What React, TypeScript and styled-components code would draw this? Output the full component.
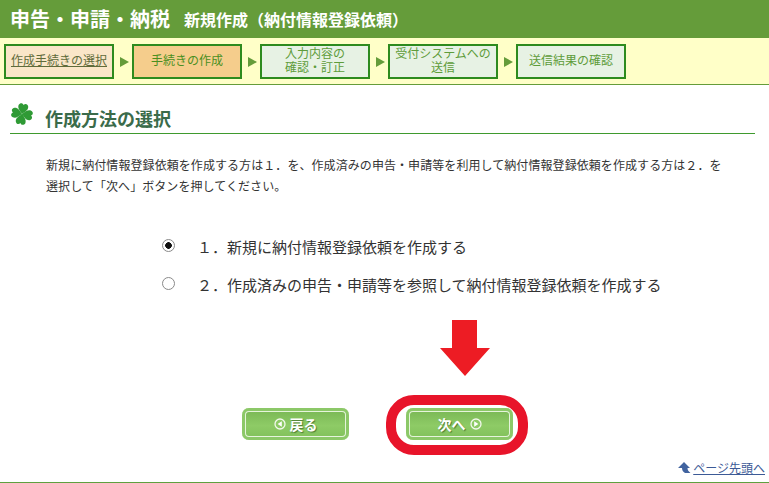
import styled, { createGlobalStyle } from 'styled-components';

const GlobalStyle = createGlobalStyle`
    html, body {
        margin: 0;
        padding: 0;
        background: #fff;
        overflow: hidden;
    }
    body {
        font-family: 'Noto Sans CJK JP', 'Noto Sans', sans-serif;
    }
`;

const Page = styled.div`
    width: 769px;
    height: 483px;
    display: flex;
    flex-direction: column;
`;

const TitleBar = styled.header`
    height: 38px;
    padding-left: 10px;
    display: flex;
    align-items: center;
    gap: 14px;
    background: #659c3a;
    color: #fff;
    font-weight: 700;
`;

const MainTitle = styled.h1`
    margin: 0;
    font-size: 20px;
    line-height: 38px;
`;

const SubTitle = styled.span`
    font-size: 16px;
`;

const StepBar = styled.nav`
    height: 47px;
    padding: 6px 0 0 4px;
    box-sizing: border-box;
    display: flex;
    background: #ffffc8;
    border-bottom: 1px solid #659c3a;
`;

const Step = styled.div<{ $state: 'done' | 'active' | 'todo' }>`
    width: 110px;
    height: 35px;
    padding-bottom: 3px;
    box-sizing: border-box;
    display: flex;
    align-items: center;
    justify-content: center;
    text-align: center;
    font-size: 12px;
    line-height: 14px;
    border: 2px solid #2e8b1e;
    color: ${p => (p.$state === 'done' ? '#5f6b3a' : p.$state === 'active' ? '#4a8f1f' : '#5e9c3a')};
    background: ${p => (p.$state === 'done' ? '#fae6c8' : p.$state === 'active' ? '#f5cd8c' : '#e7f2e4')};
    text-decoration: ${p => (p.$state === 'done' ? 'underline' : 'none')};
`;

const StepArrow = styled.span`
    width: 18px;
    height: 35px;
    display: flex;
    align-items: center;
    justify-content: center;
    &::before {
        content: '';
        margin-left: 2px;
        border-left: 9px solid #659c3a;
        border-top: 5px solid transparent;
        border-bottom: 5px solid transparent;
    }
`;

const Content = styled.main`
    flex: 1;
    display: flex;
    flex-direction: column;
    border-bottom: 1px solid #5fa040;
`;

const SectionHead = styled.div`
    margin: 17px 14px 0 10px;
    height: 31px;
    display: flex;
    align-items: flex-start;
    gap: 11px;
    border-bottom: 1px solid #3f9a2e;
`;

const SectionTitle = styled.h2`
    margin: 5px 0 0;
    font-size: 18px;
    line-height: 22px;
    font-weight: 700;
    color: #3a6b4a;
`;

const Lead = styled.p`
    margin: 20px 0 0 46px;
    width: 680px;
    font-size: 12px;
    letter-spacing: 0.07px;
    line-height: 21px;
    color: #333;
`;

const OptionList = styled.div`
    margin: 40px 0 0 162px;
    display: flex;
    flex-direction: column;
    gap: 17px;
`;

const Option = styled.label`
    height: 21px;
    display: flex;
    align-items: center;
    gap: 22px;
    font-size: 15px;
    color: #333;
`;

const Radio = styled.input`
    appearance: none;
    width: 13px;
    height: 13px;
    margin: -3px 0 0;
    box-sizing: border-box;
    border: 1px solid #8a8a8a;
    border-radius: 50%;
    background: #fff;
    &:checked {
        background: radial-gradient(circle, #111 0 3px, #fff 3.6px);
    }
`;

const ArrowRow = styled.div`
    margin: 25px 0 0 440px;
    height: 56px;
`;

const ButtonRow = styled.div`
    margin: 32px 0 0 242px;
    display: flex;
    gap: 57px;
`;

const NavButton = styled.div`
    position: relative;
    width: 107px;
    height: 32px;
    display: flex;
    align-items: center;
    justify-content: center;
    gap: 4px;
    border-radius: 7px;
    background: linear-gradient(#77b553, #8ecb66 55%, #7fbf59);
    box-shadow: inset 0 0 0 3px #8cc868, inset 0 0 0 4px #e6f4dc;
    color: #fff;
    font-size: 14px;
    font-weight: 700;
    text-shadow: 1px 1px 1px #4c7d33;
`;

const Ring = styled.span`
    position: absolute;
    left: -20px;
    top: -13px;
    width: 142px;
    height: 60px;
    box-sizing: border-box;
    border: 10px solid #e8142a;
    border-radius: 28px;
`;

const TopLinkRow = styled.div`
    margin: 20px 4px 0 0;
    display: flex;
    justify-content: flex-end;
    align-items: center;
    gap: 2px;
`;

const TopLink = styled.a`
    font-size: 12px;
    line-height: 16px;
    color: #3c5a96;
    text-decoration: underline;
`;

const Clover = () => (
    <svg width="24" height="24" viewBox="0 0 22 23">
        {[0, 90, 180, 270].map(r => (
            <path
                key={r}
                transform={`rotate(${r + 10} 11 11.5)`}
                d="M11 11.5C8 8.5 5.6 6.5 6.4 3.4 7.1 1 9.9 .6 11 2.8 12.1 .6 14.9 1 15.6 3.4 16.4 6.5 14 8.5 11 11.5Z"
                fill="#2f9a35"
            />
        ))}
        <path d="M11 11.5l2.5 9" stroke="#2f9a35" strokeWidth="1.4" fill="none" />
    </svg>
);

const DownArrow = () => (
    <svg width="50" height="56" viewBox="0 0 50 56">
        <path d="M12 0h25v28h13L25 56 0 28h12Z" fill="#ed1c24" />
    </svg>
);

const CircleIcon = ({ flip }: { flip?: boolean }) => (
    <svg width="12" height="12" viewBox="0 0 12 12">
        <circle cx="6" cy="6" r="5" fill="#8ecb66" stroke="#f2f8ec" strokeWidth="1.3" />
        <path d={flip ? 'M7.8 3.2v5.6L3.6 6Z' : 'M4.2 3.2v5.6L8.4 6Z'} fill="#fff" />
    </svg>
);

const TopIcon = () => (
    <svg width="13" height="13" viewBox="0 0 13 13">
        <path d="M6 0l6 6H9.5c0 2 1 3.500 3 5H7C5 10 4 8 4 6H0Z" fill="#41639f" />
    </svg>
);

export default function App() {
    return (
        <Page>
            <GlobalStyle />
            <TitleBar>
                <MainTitle>申告・申請・納税</MainTitle>
                <SubTitle>新規作成（納付情報登録依頼）</SubTitle>
            </TitleBar>
            <StepBar>
                <Step $state="done">作成手続きの選択</Step>
                <StepArrow />
                <Step $state="active">手続きの作成</Step>
                <StepArrow />
                <Step $state="todo">
                    入力内容の
                    <br />
                    確認・訂正
                </Step>
                <StepArrow />
                <Step $state="todo">
                    受付システムへの
                    <br />
                    送信
                </Step>
                <StepArrow />
                <Step $state="todo">送信結果の確認</Step>
            </StepBar>
            <Content>
                <SectionHead>
                    <Clover />
                    <SectionTitle>作成方法の選択</SectionTitle>
                </SectionHead>
                <Lead>
                    新規に納付情報登録依頼を作成する方は１．を、作成済みの申告・申請等を利用して納付情報登録依頼を作成する方は２．を選択して「次へ」ボタンを押してください。
                </Lead>
                <OptionList>
                    <Option>
                        <Radio type="radio" name="method" defaultChecked />
                        １．新規に納付情報登録依頼を作成する
                    </Option>
                    <Option>
                        <Radio type="radio" name="method" />
                        ２．作成済みの申告・申請等を参照して納付情報登録依頼を作成する
                    </Option>
                </OptionList>
                <ArrowRow>
                    <DownArrow />
                </ArrowRow>
                <ButtonRow>
                    <NavButton>
                        <CircleIcon flip />
                        戻る
                    </NavButton>
                    <NavButton>
                        次へ
                        <CircleIcon />
                        <Ring />
                    </NavButton>
                </ButtonRow>
                <TopLinkRow>
                    <TopIcon />
                    <TopLink>ページ先頭へ</TopLink>
                </TopLinkRow>
            </Content>
        </Page>
    );
}
